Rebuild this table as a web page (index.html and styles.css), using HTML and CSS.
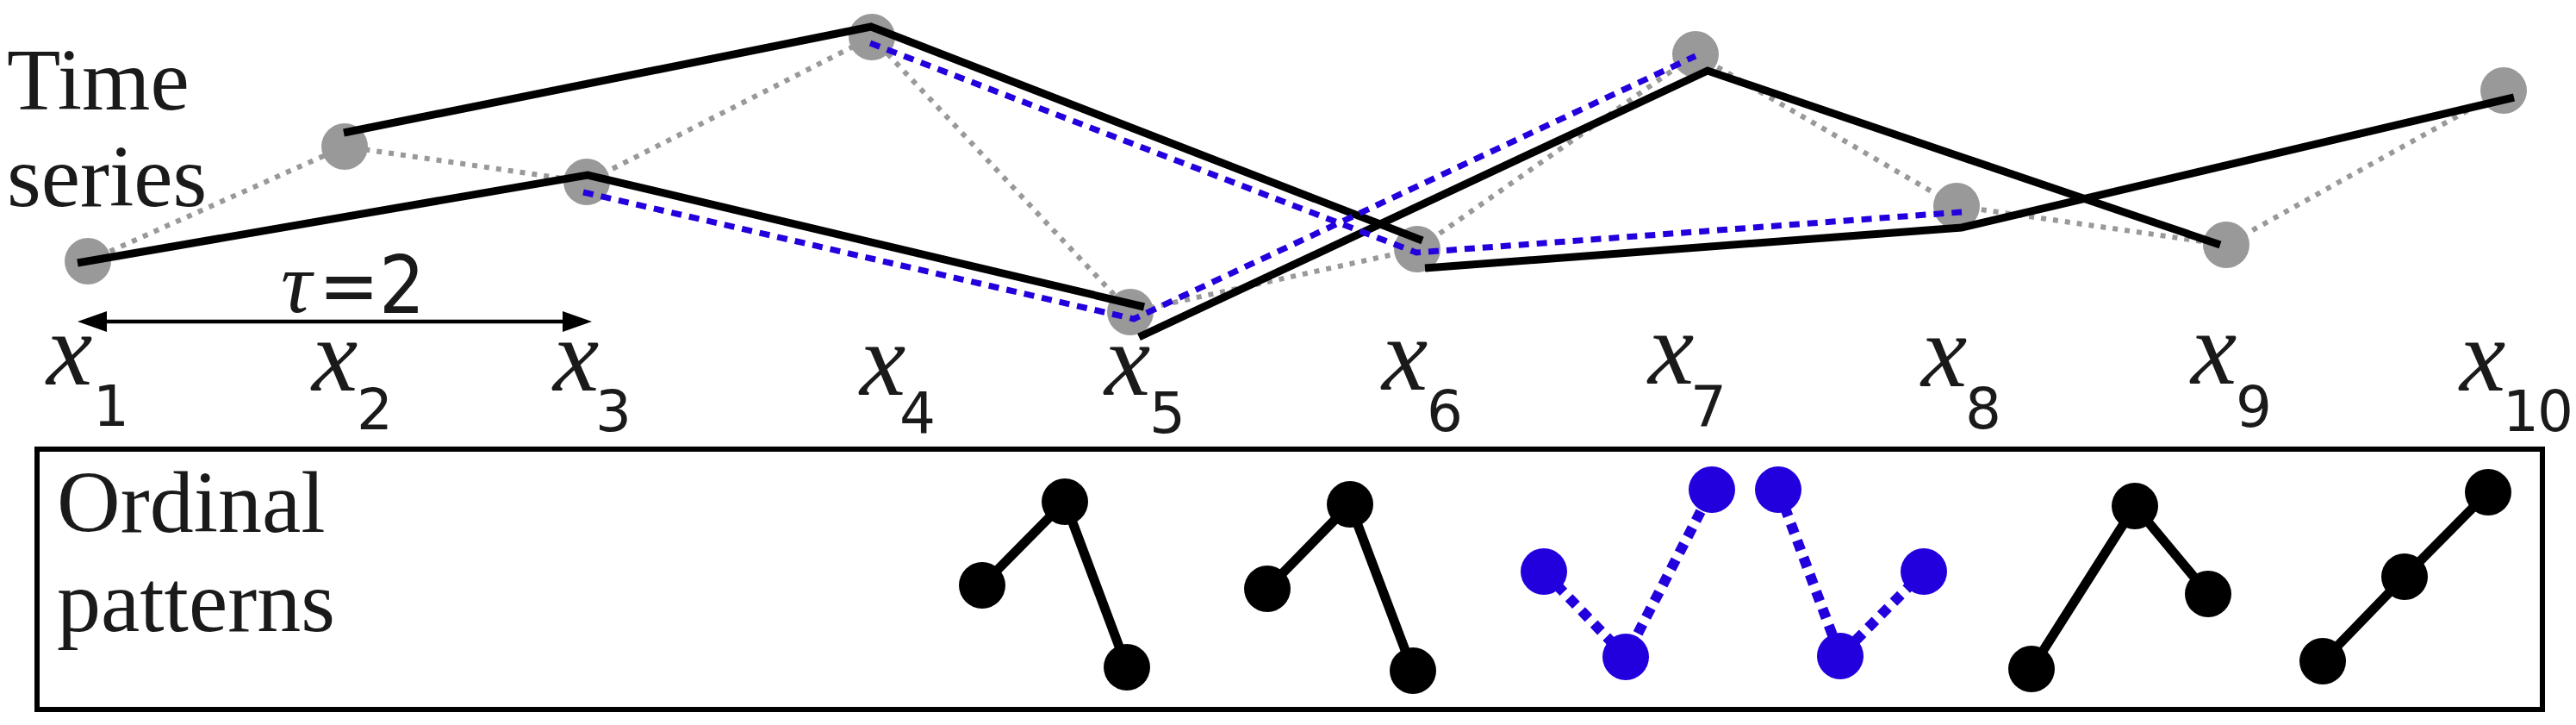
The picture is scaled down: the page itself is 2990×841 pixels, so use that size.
FILE: index.html
```html
<!DOCTYPE html>
<html lang="en">
<head>
<meta charset="utf-8">
<title>Ordinal patterns of a time series</title>
<link rel="stylesheet" href="styles.css">
</head>
<body>
<main class="figure">
  <section class="series">
    <div class="series-label">Time<br>series</div>
    <svg class="series-plot" width="2990" height="518" viewBox="0 0 2990 518" xmlns="http://www.w3.org/2000/svg">
      <polyline class="ts-dots" points="102,303 400,170 681,211 1012,43 1312,362 1645,289 1968,63 2271,239 2584,284 2906,105"/>
      <g class="ts-points">
        <circle cx="102" cy="303" r="27"/>
        <circle cx="400" cy="170" r="27"/>
        <circle cx="681" cy="211" r="27"/>
        <circle cx="1012" cy="43" r="27"/>
        <circle cx="1312" cy="362" r="27"/>
        <circle cx="1645" cy="289" r="27"/>
        <circle cx="1968" cy="63" r="27"/>
        <circle cx="2271" cy="239" r="27"/>
        <circle cx="2584" cy="284" r="27"/>
        <circle cx="2906" cy="105" r="27"/>
      </g>
      <polyline class="ts-black" points="90,305 682,203 1328,356"/>
      <polyline class="ts-black" points="399,154 1011,31 1651,279"/>
      <polyline class="ts-black" points="1322,391 1982,82 2577,284"/>
      <polyline class="ts-black" points="1654,311 2277,264 2918,113"/>
      <polyline class="ts-blue" points="677,223 1316,370 1968,65"/>
      <polyline class="ts-blue" points="1010,50 1644,293 2277,246"/>
      <line class="arrow-line" x1="120" y1="373" x2="656" y2="373"/>
      <polygon class="arrow-head" points="90,373 124,361 124,385"/>
      <polygon class="arrow-head" points="687,373 653,361 653,385"/>
      <text class="tau" x="326" y="362">τ</text>
      <text class="tau-eq" x="370" y="363">=2</text>
      <g class="labels">
        <text class="xv" x="54" y="446">x</text><text class="xs" x="108" y="494">1</text>
        <text class="xv" x="362" y="453">x</text><text class="xs" x="414" y="498">2</text>
        <text class="xv" x="642" y="453">x</text><text class="xs" x="691" y="500">3</text>
        <text class="xv" x="998" y="458">x</text><text class="xs" x="1044" y="502">4</text>
        <text class="xv" x="1282" y="458">x</text><text class="xs" x="1334" y="502">5</text>
        <text class="xv" x="1604" y="452">x</text><text class="xs" x="1656" y="500">6</text>
        <text class="xv" x="1913" y="445">x</text><text class="xs" x="1962" y="495">7</text>
        <text class="xv" x="2230" y="448">x</text><text class="xs" x="2281" y="497">8</text>
        <text class="xv" x="2543" y="445">x</text><text class="xs" x="2595" y="495">9</text>
        <text class="xv" x="2855" y="453">x</text><text class="xs xs-tight" x="2905" y="500">10</text>
      </g>
    </svg>
  </section>
  <section class="patterns">
    <div class="patterns-label">Ordinal<br>patterns</div>
    <svg class="patterns-plot" width="2914" height="308" viewBox="0 0 2914 308" xmlns="http://www.w3.org/2000/svg">
      <g transform="translate(-40 -518)">
        <g class="pat">
          <polyline points="1140,679 1236,582 1308,774"/>
          <circle cx="1140" cy="679" r="27"/><circle cx="1236" cy="582" r="27"/><circle cx="1308" cy="774" r="27"/>
        </g>
        <g class="pat">
          <polyline points="1471,683 1567,585 1640,778"/>
          <circle cx="1471" cy="683" r="27"/><circle cx="1567" cy="585" r="27"/><circle cx="1640" cy="778" r="27"/>
        </g>
        <g class="pat pat-blue">
          <polyline points="1792,663 1887,762 1987,568"/>
          <circle cx="1792" cy="663" r="27"/><circle cx="1887" cy="762" r="27"/><circle cx="1987" cy="568" r="27"/>
        </g>
        <g class="pat pat-blue">
          <polyline points="2064,568 2136,761 2233,663"/>
          <circle cx="2064" cy="568" r="27"/><circle cx="2136" cy="761" r="27"/><circle cx="2233" cy="663" r="27"/>
        </g>
        <g class="pat">
          <polyline points="2358,776 2478,587 2563,689"/>
          <circle cx="2358" cy="776" r="27"/><circle cx="2478" cy="587" r="27"/><circle cx="2563" cy="689" r="27"/>
        </g>
        <g class="pat">
          <polyline points="2696,767 2791,669 2888,571"/>
          <circle cx="2696" cy="767" r="27"/><circle cx="2791" cy="669" r="27"/><circle cx="2888" cy="571" r="27"/>
        </g>
      </g>
    </svg>
  </section>
</main>
</body>
</html>
```

FILE: styles.css
```css
html, body {
  margin: 0;
  padding: 0;
  background: #ffffff;
}

.figure {
  width: 2990px;
  height: 841px;
  overflow: hidden;
  color: #1a1a1a;
}

.series {
  position: relative;
  height: 518px;
}

.series-label {
  width: max-content;
  padding: 37px 0 0 8px;
  font-family: "Liberation Serif", "Times New Roman", serif;
  font-size: 102px;
  line-height: 112px;
}

.series-plot {
  position: absolute;
  left: 0;
  top: 0;
  overflow: visible;
}

.ts-dots {
  fill: none;
  stroke: #999999;
  stroke-width: 6;
  stroke-dasharray: 6 8;
}

.ts-points circle {
  fill: #999999;
}

.ts-black {
  fill: none;
  stroke: #000000;
  stroke-width: 9;
  stroke-linejoin: miter;
}

.ts-blue {
  fill: none;
  stroke: #2200dd;
  stroke-width: 7;
  stroke-dasharray: 12 9;
}

.arrow-line {
  stroke: #000000;
  stroke-width: 4.5;
}

.arrow-head {
  fill: #000000;
}

.tau {
  font-family: "Liberation Serif", serif;
  font-style: italic;
  font-size: 100px;
  fill: #1a1a1a;
}

.tau-eq {
  font-family: "DejaVu Sans", sans-serif;
  font-stretch: condensed;
  font-size: 93px;
  fill: #1a1a1a;
}

.xv {
  font-family: "Liberation Serif", serif;
  font-style: italic;
  font-size: 120px;
  fill: #1a1a1a;
}

.xs {
  font-family: "DejaVu Sans", sans-serif;
  font-size: 66px;
  fill: #1a1a1a;
}

.xs-tight {
  letter-spacing: -2px;
}

.patterns {
  position: relative;
  box-sizing: border-box;
  margin-left: 40px;
  width: 2914px;
  height: 308px;
  border: 6px solid #000000;
}

.patterns-label {
  width: max-content;
  padding: 1px 0 0 20px;
  font-family: "Liberation Serif", "Times New Roman", serif;
  font-size: 102px;
  line-height: 115px;
}

.patterns-plot {
  position: absolute;
  left: -6px;
  top: -6px;
  overflow: visible;
}

.pat polyline {
  fill: none;
  stroke: #000000;
  stroke-width: 11;
}

.pat circle {
  fill: #000000;
}

.pat-blue polyline {
  stroke: #2200dd;
  stroke-width: 12;
  stroke-dasharray: 12 9;
}

.pat-blue circle {
  fill: #2200dd;
}
```
